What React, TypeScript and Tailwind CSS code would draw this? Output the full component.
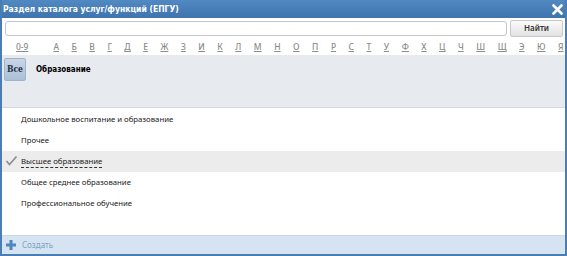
import React from "react";

const letters = ["А","Б","В","Г","Д","Е","Ж","З","И","К","Л","М","Н","О","П","Р","С","Т","У","Ф","Х","Ц","Ч","Ш","Щ","Э","Ю","Я"];
const items = [
  "Дошкольное воспитание и образование",
  "Прочее",
  "Высшее образование",
  "Общее среднее образование",
  "Профессиональное обучение",
];

export default function App() {
  return (
    <div className="w-[567px] h-[256px] bg-[#4a7db4] flex flex-col px-[2px] pb-[2px] overflow-hidden" style={{ fontFamily: '"Noto Sans", sans-serif' }}>
      <div className="h-[18px] flex items-center justify-between pl-[1px] pr-[2px] bg-gradient-to-b from-[#5189c2] to-[#3f74ad]">
        <span className="text-white font-bold text-[8.5px]" style={{ fontFamily: '"DejaVu Sans", sans-serif', fontStretch: "condensed" }}>Раздел каталога услуг/функций (ЕПГУ)</span>
        <svg width="11" height="11" viewBox="0 0 11 11" className="mt-[1px]">
          <path d="M1.5 1.5 L9.5 9.5 M9.5 1.5 L1.5 9.5" stroke="white" strokeWidth="2.6" strokeLinecap="round" />
        </svg>
      </div>
      <div className="flex-1 bg-white flex flex-col">
        <div className="flex items-center gap-[3px] pl-[3px] pr-[2px] pt-[1px] h-[19px]">
          <div className="flex-1 h-[15px] rounded-[3px] border border-[#c4c8cc] bg-white" />
          <button className="w-[53px] h-[17px] rounded-[2px] border border-[#c8c8c8] bg-gradient-to-b from-[#fbfbfb] to-[#e2e2e2] text-[8px] text-[#333] font-semibold">Найти</button>
        </div>
        <div className="h-[18px] pt-[3px] flex items-center pl-[14px] pr-[1px] text-[8.5px] font-medium text-[#8c8c8c]">
          <span className="underline mr-[25px]">0-9</span>
          <div className="flex-1 flex justify-between">
            {letters.map((l) => (
              <span key={l} className="underline">{l}</span>
            ))}
          </div>
        </div>
        <div className="h-[53px] bg-[#e7eaee] border-b border-[#d4d8dd] flex items-start pl-[2px] pt-[3px]">
          <div className="w-[22px] h-[23px] rounded-[2px] bg-gradient-to-b from-[#c9d6e5] to-[#aabfd6] border border-[#9fb3ca] flex items-center justify-center text-[8.5px] font-bold text-[#1c2c44]" style={{ fontFamily: '"DejaVu Serif", serif', fontStretch: "condensed" }}>Все</div>
          <div className="ml-[10px] h-[23px] flex items-center text-[8px] font-bold text-black" style={{ fontFamily: '"DejaVu Sans", sans-serif', fontStretch: "condensed" }}>Образование</div>
        </div>
        <div className="flex-1 flex flex-col pt-[1px]">
          {items.map((it, i) => (
            <div key={it} className={`h-[21px] flex items-center relative pl-[19px] text-[7.75px] text-[#222] ${i === 2 ? "bg-[#ececec]" : ""}`}>
              {i === 2 && (
                <svg width="13" height="11" viewBox="0 0 13 11" className="absolute left-[3px] top-[4px]">
                  <path d="M1.5 6 L4.5 9.5 L11.5 1.5" stroke="#8f8f8f" strokeWidth="1.8" fill="none" />
                </svg>
              )}
              <span className={i === 2 ? "border-b border-dashed border-[#333] leading-[11px]" : ""}>{it}</span>
            </div>
          ))}
        </div>
        <div className="h-[19px] bg-[#d6e4f1] border-t border-[#c8d8e8] flex items-center pl-[3px] gap-[5px]">
          <svg width="12" height="12" viewBox="0 0 12 12">
            <path d="M6 1 V11 M1 6 H11" stroke="#4f84bd" strokeWidth="3" />
          </svg>
          <span className="text-[8px] text-[#7d9fc7]">Создать</span>
        </div>
      </div>
    </div>
  );
}
